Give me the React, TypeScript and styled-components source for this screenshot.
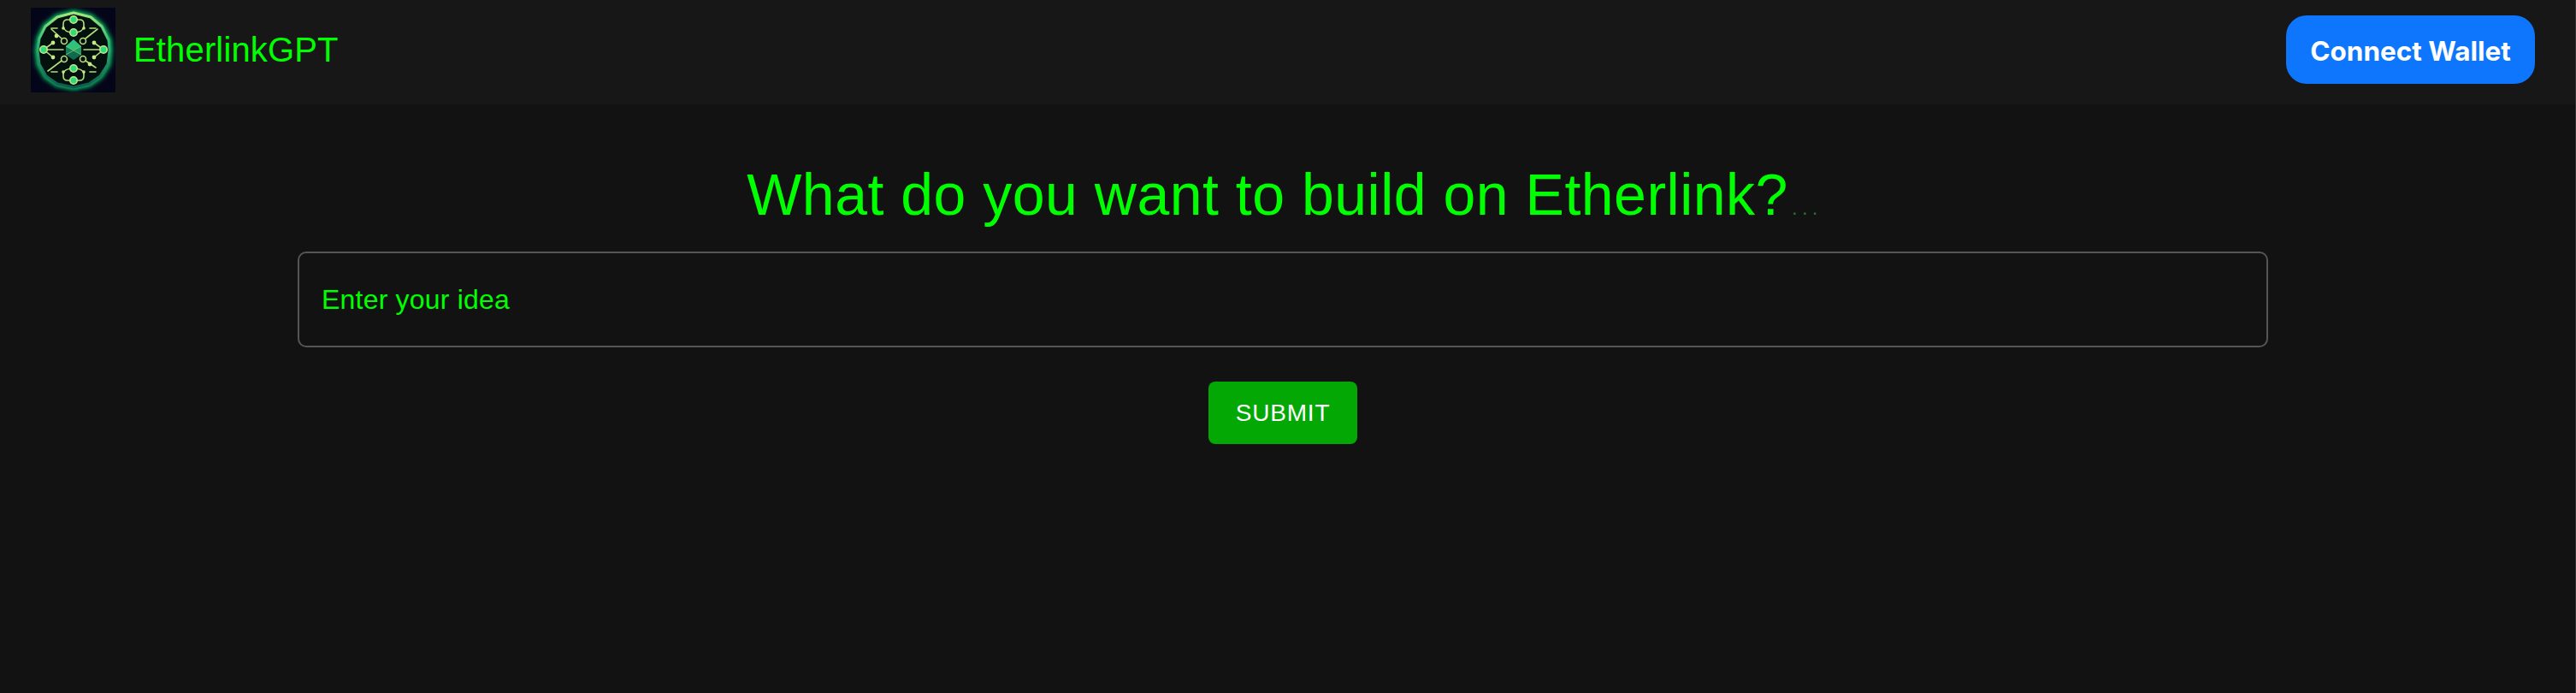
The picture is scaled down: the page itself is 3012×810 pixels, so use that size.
import React from "react";
import styled, { createGlobalStyle } from "styled-components";

const GlobalStyle = createGlobalStyle`
  html, body {
    margin: 0;
    padding: 0;
    background: #121212;
  }
`;

const Page = styled.div`
  min-height: 810px;
  box-sizing: border-box;
  background: #121212;
  border-right: 1px solid #333333;
  font-family: "Liberation Sans", Arial, sans-serif;
`;

const Navbar = styled.header`
  height: 122px;
  box-sizing: border-box;
  padding: 0 47px 6px 36px;
  display: flex;
  align-items: center;
  justify-content: space-between;
  background: #171717;
`;

const Brand = styled.div`
  display: flex;
  align-items: center;
  gap: 21px;
`;

const BrandName = styled.span`
  color: #00ff00;
  font-size: 40px;
  line-height: 48px;
  letter-spacing: 0.15px;
`;

const WalletButton = styled.button`
  width: 291px;
  height: 80px;
  padding: 2px 0 0;
  border: none;
  border-radius: 24px;
  background: #0e76fd;
  color: #ffffff;
  font-family: Inter, sans-serif;
  font-size: 31.5px;
  font-weight: 700;
  cursor: pointer;
`;

const Main = styled.main`
  display: flex;
  flex-direction: column;
  align-items: center;
  padding: 63px 11px 0 0;
`;

const Title = styled.h1`
  margin: 0 0 0 4px;
  color: #00ff00;
  font-size: 68px;
  font-weight: 400;
  line-height: 84px;
  letter-spacing: 0.5px;
`;

const Dots = styled.span`
  margin-left: 4px;
  color: #2f6b2f;
  font-size: 24px;
  line-height: 1;
  letter-spacing: 5.3px;
`;

const IdeaInput = styled.input`
  width: 2304px;
  height: 112px;
  margin-top: 25px;
  box-sizing: border-box;
  padding: 0 26px;
  border: 2px solid #555555;
  border-radius: 10px;
  background: transparent;
  color: #00ff00;
  font-family: "Liberation Sans", Arial, sans-serif;
  font-size: 32px;
  letter-spacing: 0.2px;
  outline: none;

  &::placeholder {
    color: #00ff00;
    opacity: 1;
  }
`;

const SubmitButton = styled.button`
  width: 174px;
  height: 73px;
  margin-top: 40px;
  border: none;
  border-radius: 8px;
  background: #04a804;
  color: #ffffff;
  font-family: "Liberation Sans", Arial, sans-serif;
  font-size: 28px;
  letter-spacing: 0.8px;
  cursor: pointer;
`;

const RING = "50,6 70,11 83,22 91,38 92,50 90,66 81,80 68,89 50,93 31,89 18,80 10,66 8,50 10,36 17,22 31,11";

const Logo = () => (
  <svg width="99" height="99" viewBox="0 0 99 99">
    <defs>
      <filter id="glow" x="-20%" y="-20%" width="140%" height="140%">
        <feGaussianBlur stdDeviation="2.6" />
      </filter>
      <linearGradient id="rim" x1="0" y1="0" x2="0" y2="1">
        <stop offset="0" stopColor="#a4e87c" />
        <stop offset="0.4" stopColor="#2fb878" />
        <stop offset="1" stopColor="#0c5a50" />
      </linearGradient>
    </defs>
    <rect width="99" height="99" fill="#05051a" />
    <polygon points={RING} fill="none" stroke="#0fc060" strokeWidth="7" filter="url(#glow)" />
    <polygon points={RING} fill="#03100d" stroke="url(#rim)" strokeWidth="3" strokeLinejoin="round" />
    <g fill="none" stroke="#b4dc78" strokeWidth="1.6" strokeLinecap="round">
      <path d="M15 49H38M62 49H85" />
      <path d="M15 49L26 41M15 49L26 58M85 49L74 41M85 49L74 58" />
      <path d="M20 74L36 62M64 62L76 70M36 36L24 25M64 36L78 25" />
      <path d="M50 14H43Q38 14 38 19V24M50 14H57Q62 14 62 19V24" />
      <path d="M50 85H43Q38 85 38 80V75M50 85H57Q62 85 62 80V75" />
      <path d="M38 22Q39 29 50 29Q61 29 62 22M38 77Q39 71 50 71Q61 71 62 77" />
      <path d="M24 24H31M69 24H76M24 75H31M69 75H76" />
      <circle cx="39" cy="39" r="3.5" />
      <circle cx="61" cy="39" r="3.5" />
      <circle cx="39" cy="60" r="3.5" />
      <circle cx="61" cy="60" r="3.5" />
    </g>
    <g fill="#c8e884">
      <circle cx="26" cy="41" r="2.4" />
      <circle cx="26" cy="58" r="2.4" />
      <circle cx="74" cy="41" r="2.4" />
      <circle cx="74" cy="58" r="2.4" />
      <circle cx="30" cy="33" r="2.4" />
      <circle cx="69" cy="66" r="2.4" />
      <circle cx="38" cy="24" r="1.8" />
      <circle cx="62" cy="24" r="1.8" />
      <circle cx="38" cy="75" r="1.8" />
      <circle cx="62" cy="75" r="1.8" />
    </g>
    <g fill="#2cdc7c" stroke="#c4e684" strokeWidth="1.6">
      <circle cx="50" cy="14" r="4.2" />
      <circle cx="50" cy="29" r="4.2" />
      <circle cx="50" cy="71" r="4.2" />
      <circle cx="50" cy="85" r="4.2" />
      <circle cx="15" cy="49" r="4.2" />
      <circle cx="85" cy="49" r="4.2" />
    </g>
    <polygon points="50,37 59,45 50,50 41,45" fill="#2fc27c" />
    <polygon points="41,45 50,50 41,55" fill="#0e7d5c" />
    <polygon points="59,45 50,50 59,55" fill="#1a9e68" />
    <polygon points="41,55 50,50 59,55 50,61" fill="#0f6a50" />
    <path d="M41 45L59 55M59 45L41 55" fill="none" stroke="#8ad06a" strokeWidth="0.8" />
  </svg>
);

export default function App() {
  return (
    <Page>
      <GlobalStyle />
      <Navbar>
        <Brand>
          <Logo />
          <BrandName>EtherlinkGPT</BrandName>
        </Brand>
        <WalletButton>Connect Wallet</WalletButton>
      </Navbar>
      <Main>
        <Title>
          What do you want to build on Etherlink?<Dots>...</Dots>
        </Title>
        <IdeaInput placeholder="Enter your idea" />
        <SubmitButton>SUBMIT</SubmitButton>
      </Main>
    </Page>
  );
}
